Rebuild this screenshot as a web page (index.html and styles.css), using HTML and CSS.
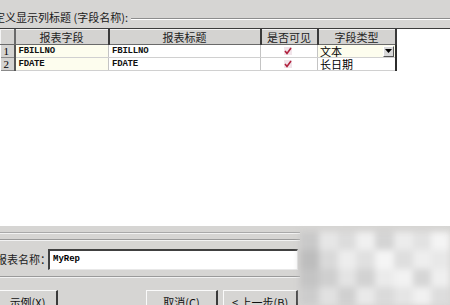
FILE: index.html
```html
<!DOCTYPE html>
<html>
<head>
<meta charset="utf-8">
<link rel="stylesheet" href="styles.css">
</head>
<body>
<div class="page">
  <div class="group-head">
    <span class="group-title">定义显示列标题 (字段名称):</span>
    <span class="etch"></span>
  </div>
  <div class="grid-area">
    <table class="grid">
      <colgroup>
        <col class="c0"><col class="c1"><col class="c2"><col class="c3"><col class="c4">
      </colgroup>
      <thead>
        <tr>
          <th class="corner"></th>
          <th>报表字段</th>
          <th>报表标题</th>
          <th>是否可见</th>
          <th>字段类型</th>
        </tr>
      </thead>
      <tbody>
        <tr>
          <td class="rh">1</td>
          <td class="mono yel">FBILLNO</td>
          <td class="mono">FBILLNO</td>
          <td class="chk"><svg width="8" height="8" viewBox="0 0 8 8"><rect x="0" y="0" width="8" height="8" fill="#f1e4ea"/><path d="M1 4 L3 6.5 L7 1" fill="none" stroke="#b0203c" stroke-width="1.6"/></svg></td>
          <td class="type yel"><span class="combo"><span class="ctext">文本</span><span class="cbtn"><svg width="7" height="4" viewBox="0 0 7 4"><path d="M0 0 H7 L3.5 4 Z" fill="#000"/></svg></span></span></td>
        </tr>
        <tr>
          <td class="rh">2</td>
          <td class="mono yel">FDATE</td>
          <td class="mono">FDATE</td>
          <td class="chk"><svg width="8" height="8" viewBox="0 0 8 8"><rect x="0" y="0" width="8" height="8" fill="#f1e4ea"/><path d="M1 4 L3 6.5 L7 1" fill="none" stroke="#b0203c" stroke-width="1.6"/></svg></td>
          <td class="type">长日期</td>
        </tr>
      </tbody>
    </table>
  </div>
  <div class="bottom">
    <div class="rule r1"></div>
    <div class="rule r2"></div>
    <div class="name-row">
      <span class="name-label">报表名称：</span>
      <span class="textbox">MyRep</span>
    </div>
    <div class="rule r3"></div>
    <div class="buttons">
      <span class="btn b1">示例(X)</span>
      <span class="btn b2">取消(C)</span>
      <span class="btn b3">&lt; 上一步(B)</span>
    </div>
    <div class="mosaic">
      <i style="background:#c9c9c9"></i><i style="background:#e6e6e6"></i><i style="background:#dcdcdc"></i><i style="background:#f0f0f0"></i><i style="background:#d4d4d4"></i><i style="background:#ececec"></i><i style="background:#e2e2e2"></i><i style="background:#f4f4f4"></i>
      <i style="background:#bdbdbd"></i><i style="background:#d9d9d9"></i><i style="background:#ededed"></i><i style="background:#e0e0e0"></i><i style="background:#f5f5f5"></i><i style="background:#dedede"></i><i style="background:#eeeeee"></i><i style="background:#e8e8e8"></i>
      <i style="background:#c4c4c4"></i><i style="background:#cfcfcf"></i><i style="background:#e4e4e4"></i><i style="background:#d2d2d2"></i><i style="background:#ebebeb"></i><i style="background:#f2f2f2"></i><i style="background:#d6d6d6"></i><i style="background:#efefef"></i>
      <i style="background:#cccccc"></i><i style="background:#e1e1e1"></i><i style="background:#d0d0d0"></i><i style="background:#e9e9e9"></i><i style="background:#dadada"></i><i style="background:#e5e5e5"></i><i style="background:#f1f1f1"></i><i style="background:#dddddd"></i>
    </div>
  </div>
</div>
</body>
</html>
```
FILE: styles.css
```css
html, body {
  margin: 0;
  padding: 0;
}
body {
  width: 450px;
  height: 305px;
  overflow: hidden;
  background: #d6d5d3;
  font-family: "Noto Sans CJK SC", "DejaVu Sans", sans-serif;
  font-size: 11px;
  color: #000;
}
.page {
  position: relative;
  width: 450px;
  height: 305px;
}
.group-head {
  height: 28px;
  display: flex;
  align-items: flex-start;
  padding-top: 10px;
  box-sizing: border-box;
}
.group-title {
  margin-left: -6px;
  line-height: 15px;
  white-space: nowrap;
  color: #1a1a1a;
}
.etch {
  flex: 1;
  margin-top: 8px;
  margin-left: 3px;
  border-top: 1px solid #8e8e8e;
  border-bottom: 1px solid #ffffff;
}
.grid-area {
  height: 198px;
  background: #fff;
  border-top: 1px solid #3c3c3c;
  box-sizing: border-box;
}
.grid {
  border-collapse: collapse;
  table-layout: fixed;
  width: 395px;
}
.c0 { width: 14px; }
.c1 { width: 94px; }
.c2 { width: 152px; }
.c3 { width: 57px; }
.c4 { width: 78px; }
.grid th {
  height: 14px;
  padding: 0;
  font-weight: normal;
  font-size: 11px;
  line-height: 13px;
  background: #d4d3d1;
  border-top: 1px solid #f4f4f4;
  border-left: 1px solid #f4f4f4;
  border-right: 2px solid #3a3a3a;
  border-bottom: 1px solid #6a6a6a;
  text-align: center;
  color: #222;
  overflow: hidden;
}
.grid th.corner {
  border-right: 2px solid #6a6a6a;
}
.grid td {
  height: 12px;
  padding: 0 0 0 3px;
  font-size: 11px;
  line-height: 12px;
  border-right: 1px solid #c4c4c4;
  border-bottom: 1px solid #d0d0d0;
  white-space: nowrap;
  overflow: hidden;
}
.grid td.rh {
  background: #d4d3d1;
  border-right: 2px solid #555;
  border-bottom: 1px solid #8a8a8a;
  font-family: "Liberation Serif", serif;
  font-size: 11px;
  padding-left: 3px;
}
.grid td.mono {
  font-family: "Liberation Mono", monospace;
  font-size: 9px;
  font-weight: bold;
  letter-spacing: -0.2px;
  padding-left: 3px;
  color: #111;
}
.grid td.yel {
  background: #fdfdee;
}
.grid td.chk {
  text-align: center;
  padding: 0 3px 0 0;
  line-height: 0;
}
.grid td.chk svg {
  vertical-align: middle;
}
.grid td.type {
  padding-left: 2px;
  border-right: 2px solid #2c2c2c;
}
.combo {
  display: flex;
  align-items: center;
  height: 12px;
}
.ctext {
  flex: 1;
  line-height: 12px;
}
.cbtn {
  width: 11px;
  height: 11px;
  margin-right: 1px;
  background: #d8d8d8;
  border-top: 1px solid #fff;
  border-left: 1px solid #fff;
  border-right: 1px solid #555;
  border-bottom: 1px solid #555;
  box-sizing: border-box;
  display: flex;
  align-items: center;
  justify-content: center;
}
.bottom {
  position: relative;
  height: 79px;
  background: #d6d5d3;
  padding-top: 6px;
  box-sizing: border-box;
}
.rule {
  height: 0;
  border-top: 1px solid #a9a9a9;
  border-bottom: 1px solid #f2f2f2;
  width: 300px;
}
.r1 { margin-bottom: 5px; }
.r2 { border-top-color: #9a9a9a; box-shadow: 0 3px 0 -1px #bdbdbd; }
.name-row {
  display: flex;
  align-items: center;
  height: 22px;
  width: 300px;
  margin-top: 7px;
}
.name-label {
  margin-left: -4px;
  width: 52px;
  white-space: nowrap;
  color: #222;
  line-height: 15px;
}
.textbox {
  flex: 1;
  height: 21px;
  background: #fff;
  border-top: 2px solid #404040;
  border-left: 2px solid #404040;
  border-right: 1px solid #e8e8e8;
  border-bottom: 1px solid #e8e8e8;
  box-sizing: border-box;
  font-family: "Liberation Mono", monospace;
  font-size: 9px;
  font-weight: bold;
  line-height: 17px;
  padding-left: 3px;
  margin-right: 2px;
}
.r3 {
  margin-top: 6px;
  border-top-color: #9a9a9a;
  box-shadow: 0 4px 0 -1px #b9b9b9;
}
.buttons {
  display: flex;
  margin-top: 12px;
  width: 300px;
  height: 20px;
}
.btn {
  display: block;
  height: 20px;
  box-sizing: border-box;
  border-top: 1px solid #fafafa;
  border-left: 1px solid #fafafa;
  border-right: 2px solid #3a3a3a;
  text-align: center;
  line-height: 18px;
  padding-top: 2px;
  font-size: 11px;
  color: #111;
}
.b1 { width: 60px; margin-left: -2px; }
.b2 { width: 72px; margin-left: 88px; }
.b3 { width: 75px; margin-left: 5px; }
.mosaic {
  position: absolute;
  left: 300px;
  top: 6px;
  width: 150px;
  height: 73px;
  display: grid;
  grid-template-columns: repeat(8, 1fr);
  grid-template-rows: repeat(4, 1fr);
  filter: blur(3px);
}
.mosaic i {
  display: block;
}
```
